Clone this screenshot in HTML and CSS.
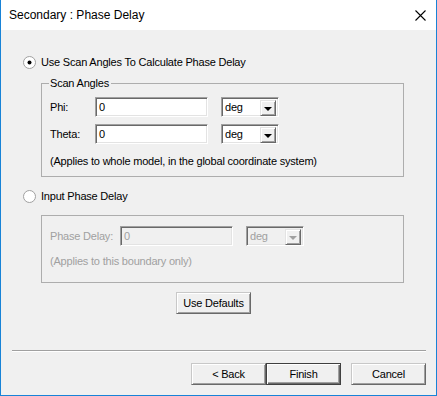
FILE: index.html
```html
<!DOCTYPE html>
<html lang="en">
<head>
    <meta charset="UTF-8">
    <title>Secondary : Phase Delay</title>
    <link rel="stylesheet" href="styles.css">
</head>
<body>
    <div class="window">
        <!-- Title bar -->
        <div class="titlebar">
            <span class="title">Secondary : Phase Delay</span>
            <svg class="close" width="11" height="11" viewBox="0 0 11 11">
                <path d="M0.5 0.5 L10.5 10.5 M10.5 0.5 L0.5 10.5" stroke="#000" stroke-width="1.1" fill="none"/>
            </svg>
        </div>

        <div class="content">
            <!-- Option 1: scan angles -->
            <label class="radio-row">
                <svg class="radio" width="13" height="13" viewBox="0 0 13 13">
                    <circle cx="6.5" cy="6.5" r="6" fill="#fff" stroke="#a0a0a0"/>
                    <circle cx="6.5" cy="6.5" r="2" fill="#000"/>
                </svg>
                <span>Use Scan Angles To Calculate Phase Delay</span>
            </label>

            <div class="group group-scan">
                <div class="group-title">Scan Angles</div>
                <div class="field-row">
                    <span class="field-label">Phi:</span>
                    <div class="textbox">0</div>
                    <div class="combo">
                        <span class="combo-text">deg</span>
                        <span class="combo-btn"><span class="arrow"></span></span>
                    </div>
                </div>
                <div class="field-row">
                    <span class="field-label">Theta:</span>
                    <div class="textbox">0</div>
                    <div class="combo">
                        <span class="combo-text">deg</span>
                        <span class="combo-btn"><span class="arrow"></span></span>
                    </div>
                </div>
                <div class="note">(Applies to whole model, in the global coordinate system)</div>
            </div>

            <!-- Option 2: input phase delay -->
            <label class="radio-row radio-second">
                <svg class="radio" width="13" height="13" viewBox="0 0 13 13">
                    <circle cx="6.5" cy="6.5" r="6" fill="#fff" stroke="#a0a0a0"/>
                </svg>
                <span>Input Phase Delay</span>
            </label>

            <div class="group group-delay disabled">
                <div class="field-row">
                    <span class="field-label wide">Phase Delay:</span>
                    <div class="textbox">0</div>
                    <div class="combo">
                        <span class="combo-text">deg</span>
                        <span class="combo-btn"><span class="arrow"></span></span>
                    </div>
                </div>
                <div class="note">(Applies to this boundary only)</div>
            </div>

            <button class="btn defaults">Use Defaults</button>
        </div>

        <!-- Wizard buttons -->
        <div class="footer">
            <div class="separator"></div>
            <div class="buttons">
                <button class="btn">&lt; Back</button>
                <button class="btn default">Finish</button>
                <button class="btn">Cancel</button>
            </div>
        </div>
    </div>
</body>
</html>
```

FILE: styles.css
```css
* {
    margin: 0;
    padding: 0;
    box-sizing: border-box;
}

body {
    background: #f0f0f0;
    font-family: "Liberation Sans", Arial, sans-serif;
    font-size: 11px;
    letter-spacing: -0.2px;
    color: #000;
}

.window {
    width: 437px;
    height: 396px;
    border: 1px solid #1883d7;
    border-top: none;
    background: #f0f0f0;
    display: flex;
    flex-direction: column;
}

.titlebar {
    height: 30px;
    background: #fff;
    display: flex;
    align-items: center;
    justify-content: space-between;
    padding: 0 10px 0 8px;
}

.title {
    font-size: 12px;
    letter-spacing: 0;
}

.content {
    padding: 26px 0 0 22px;
}

.radio-row {
    display: flex;
    align-items: center;
    gap: 5px;
    height: 13px;
    line-height: 13px;
}

.radio-second {
    margin-top: 13px;
}

.group {
    margin-left: 18px;
    width: 363px;
    border: 1px solid #adadad;
    padding: 0 0 0 8px;
}

.group-scan {
    margin-top: 14px;
    height: 94px;
}

.group-delay {
    margin-top: 12px;
    height: 68px;
    padding-top: 10px;
}

.group-title {
    width: fit-content;
    margin: -7px 0 0 -1px;
    padding: 0 2px 0 1px;
    background: #f0f0f0;
    line-height: 13px;
}

.field-row {
    display: flex;
    align-items: center;
    height: 20px;
    margin-top: 7px;
}

.group-delay .field-row {
    margin-top: 0;
}

.field-label {
    width: 45px;
}

.field-label.wide {
    width: 70px;
}

.textbox {
    width: 113px;
    height: 20px;
    background: #fff;
    border: 1px solid;
    border-color: #a0a0a0 #fff #fff #a0a0a0;
    box-shadow: inset 1px 1px #696969, inset -1px -1px #e3e3e3;
    padding: 2px 0 0 3px;
    line-height: 14px;
}

.combo {
    width: 58px;
    height: 20px;
    margin-left: 13px;
    background: #fff;
    border: 1px solid;
    border-color: #a0a0a0 #fff #fff #a0a0a0;
    box-shadow: inset 1px 1px #696969, inset -1px -1px #e3e3e3;
    display: flex;
    padding: 2px;
}

.combo-text {
    flex: 1;
    padding-left: 1px;
    line-height: 15px;
}

.combo-btn {
    width: 16px;
    height: 16px;
    background: #f0f0f0;
    border: 1px solid;
    border-color: #e3e3e3 #696969 #696969 #e3e3e3;
    box-shadow: inset 1px 1px #fff, inset -1px -1px #a0a0a0;
    display: flex;
    align-items: center;
    justify-content: center;
}

.arrow {
    width: 0;
    height: 0;
    border-left: 4px solid transparent;
    border-right: 4px solid transparent;
    border-top: 4px solid #000;
    margin-top: 1px;
}

.note {
    line-height: 13px;
    margin-top: 11px;
}

.group-delay .note {
    margin-top: 9px;
}

.disabled {
    color: #a0a0a0;
}

.disabled .textbox,
.disabled .combo {
    background: #f0f0f0;
}

.disabled .arrow {
    border-top-color: #a0a0a0;
}

.btn {
    width: 75px;
    height: 22px;
    font-family: inherit;
    font-size: 11px;
    letter-spacing: -0.2px;
    color: #000;
    background: #f0f0f0;
    border: 1px solid;
    border-color: #c8c8c8 #696969 #696969 #c8c8c8;
    box-shadow: inset 1px 1px #fff, inset -1px -1px #a0a0a0;
}

.defaults {
    display: block;
    margin: 9px 0 0 153px;
}

.btn.default {
    border-color: #404040;
    box-shadow: inset 1px 1px #fff, inset -1px -1px #696969, inset -2px -2px #a0a0a0;
    margin-right: 10px;
}

.footer {
    margin-top: auto;
    padding-bottom: 10px;
}

.separator {
    margin: 0 10px 0 11px;
    border-top: 1px solid #a0a0a0;
    border-bottom: 1px solid #fff;
}

.buttons {
    display: flex;
    justify-content: flex-end;
    padding-right: 10px;
    margin-top: 11px;
}
```
